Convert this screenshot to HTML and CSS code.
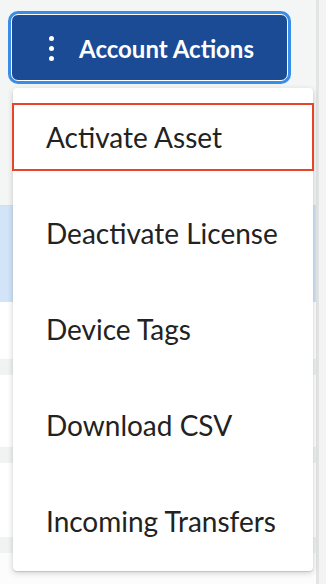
FILE: index.html
```html
<!DOCTYPE html>
<html>
<head>
<meta charset="utf-8">
<link rel="stylesheet" href="styles.css">
</head>
<body>
<div class="page">
  <div class="table">
    <div class="band header"></div>
    <div class="band selected"></div>
    <div class="band row r1"></div>
    <div class="band sep"></div>
    <div class="band row r2"></div>
    <div class="band sep"></div>
    <div class="band row r3"></div>
    <div class="band sep"></div>
    <div class="band row rest"></div>
  </div>
  <div class="edge"></div>
  <div class="gutter"></div>

  <div class="actions">
    <button class="account-btn" type="button">
      <span class="dots"><i></i><i></i><i></i></span>
      <span class="label">Account Actions</span>
    </button>
    <ul class="menu">
      <li class="item active">Activate Asset</li>
      <li class="item">Deactivate License</li>
      <li class="item">Device Tags</li>
      <li class="item">Download CSV</li>
      <li class="item">Incoming Transfers</li>
    </ul>
  </div>
</div>
</body>
</html>
```

FILE: styles.css
```css
* { box-sizing: border-box; }
html, body { margin: 0; padding: 0; }
body {
  width: 326px;
  height: 584px;
  overflow: hidden;
  font-family: Lato, "Noto Sans", sans-serif;
  background: #f4f5f5;
}
.page {
  position: relative;
  width: 326px;
  height: 584px;
  display: grid;
  grid-template-columns: 316px 3px 1fr;
}
.table {
  display: flex;
  flex-direction: column;
  height: 584px;
}
.band { flex: none; }
.header { height: 206px; background: #f4f5f5; border-bottom: 1px solid #d6dde4; }
.selected { height: 96px; background: #d1e4f8; }
.r1 { height: 57px; background: #ffffff; }
.sep { height: 16px; background: #f1f2f2; }
.r2 { height: 72px; background: #ffffff; }
.r3 { height: 74px; background: #ffffff; }
.rest { flex: 1; background: #fcfcfc; }
.edge { background: #e3e4e4; }
.gutter { background: #f3f3f3; }

.actions {
  position: absolute;
  left: 0;
  top: 0;
  width: 326px;
}
.account-btn {
  position: absolute;
  left: 11px;
  top: 14px;
  width: 277px;
  height: 67px;
  border: 1px solid #ffffff;
  border-radius: 7px;
  background: #1c4b95;
  box-shadow: 0 0 0 3px #3a8de6;
  color: #ffffff;
  display: flex;
  align-items: center;
  justify-content: center;
  gap: 25px;
  padding: 0 0 0 4px;
  font-family: Lato, "Noto Sans", sans-serif;
  font-weight: 700;
  font-size: 24px;
  cursor: pointer;
}
.dots {
  display: flex;
  flex-direction: column;
  gap: 5px;
  padding-top: 1px;
}
.dots i {
  display: block;
  width: 5px;
  height: 5px;
  border-radius: 50%;
  background: #ffffff;
}
.label { line-height: 1; padding-top: 2px; }

.menu {
  position: absolute;
  left: 13px;
  top: 88px;
  width: 300px;
  height: 483px;
  margin: 0;
  padding: 15px 0 0 0;
  list-style: none;
  background: #ffffff;
  border-radius: 4px;
  box-shadow: 0 1px 1px rgba(0,0,0,0.12), 0 2px 6px rgba(0,0,0,0.18);
  display: flex;
  flex-direction: column;
  gap: 28px;
}
.item {
  height: 68px;
  display: flex;
  align-items: center;
  padding-left: 33px;
  font-size: 28px;
  color: #222222;
  line-height: 1;
}
.item.active {
  margin: 0 -1px;
  padding-left: 32px;
  border: 2px solid #e8432b;
}
```
